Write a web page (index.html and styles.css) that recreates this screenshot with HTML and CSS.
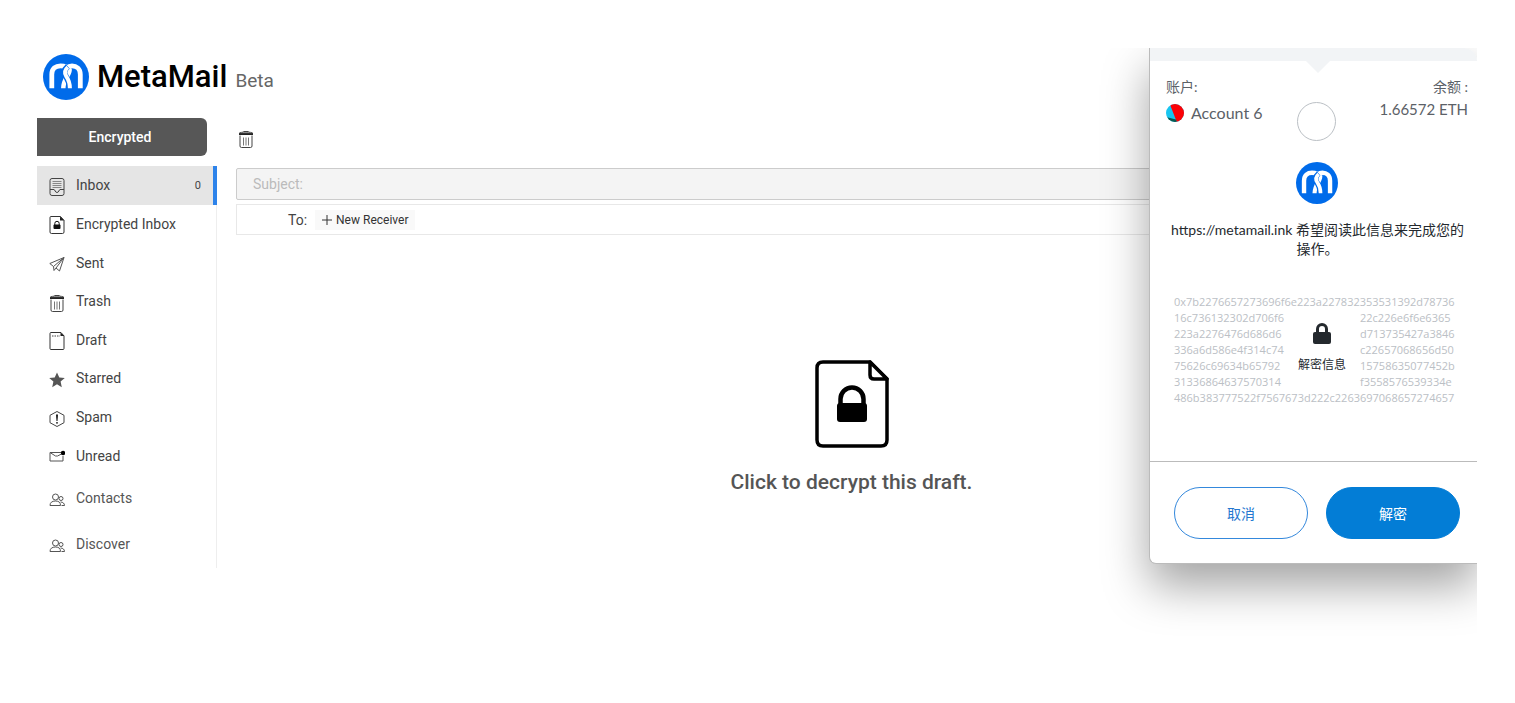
FILE: index.html
```html
<!DOCTYPE html>
<html lang="en">
<head>
<meta charset="utf-8">
<title>MetaMail Beta</title>
<link rel="stylesheet" href="styles.css">
</head>
<body>
<svg class="sprite" aria-hidden="true">
  <symbol id="logo" viewBox="0 0 46 46">
    <circle cx="23" cy="23" r="23" fill="#006bea"/>
    <g fill="none">
      <path d="M37.300 34.300V20.500c0-6-4-8.700-8.300-8.700-2 0-3.500.5-5 2" stroke="#fff" stroke-width="4.800"/>
      <path d="M8.800 34.300V20.500c0-6 4-8.700 8.700-8.700 4.500 0 7 1.500 8.500 4.200" stroke="#fff" stroke-width="4.800"/>
      <path d="M26.500 15c1.500 5-6.200 9-6.200 19.300" stroke="#fff" stroke-width="4.500"/>
      <path d="M24.800 12.500c-4 3.500-4.300 6.500-1.800 10 2 3 3.500 6 3.500 11.800" stroke="#006bea" stroke-width="5.800"/>
      <path d="M24.800 13.300c-3.400 3-3.700 5.700-1.500 9 2.200 3.200 3.600 6 3.600 12" stroke="#fff" stroke-width="4"/>
    </g>
  </symbol>
  <symbol id="trash" viewBox="0 0 16 18">
    <g fill="none" stroke="#444" stroke-width="1">
      <path d="M1 3.500C2 1.500 14 1.500 15 3.500z" fill="#ddd"/>
      <path d="M5.500 1.500h5"/>
      <path d="M2 5.500V16q0 1.500 1.500 1.500h9q1.500 0 1.500-1.500V5.500"/>
      <path d="M5.500 7.500v8M8 7.500v8M10.500 7.500v8" stroke="#777"/>
    </g>
    <path d="M1 3.500h14v1.500H1z" fill="#222"/>
  </symbol>
  <symbol id="securedoc" viewBox="0 0 74 88">
    <path d="M8 2h47l17 17v61q0 6-6 6H8q-6 0-6-6V8q0-6 6-6z" fill="none" stroke="currentColor" stroke-width="3.500"/>
    <path d="M55 2v13q0 4 4 4h13z" fill="#fff" stroke="currentColor" stroke-width="3.500" stroke-linejoin="round"/>
    <path d="M25.500 44v-5a11.500 11.500 0 0 1 23 0v5" fill="none" stroke="currentColor" stroke-width="4.500"/>
    <rect x="22" y="43" width="30" height="19" rx="3"/>
  </symbol>
  <symbol id="people" viewBox="0 0 16 16">
    <g fill="none" stroke="#555">
      <circle cx="6.500" cy="5" r="3"/>
      <path d="M1 13.500h10.500c0-3-1.500-4.500-5-4.500s-5.500 1.500-5.500 4.500z"/>
      <circle cx="12" cy="6.500" r="2"/>
      <path d="M11.500 10c2.500 0 4 1.500 4 3.500h-3"/>
    </g>
  </symbol>
</svg>

<div class="frame">
  <header class="brand">
    <svg class="brand-logo"><use href="#logo"/></svg>
    <h1 class="brand-name">MetaMail</h1>
    <span class="brand-tag">Beta</span>
  </header>

  <div class="workspace">
    <aside class="sidebar">
      <button class="compose" type="button">Encrypted</button>
      <nav class="menu">
        <div class="folders">
          <a class="item item-active" href="#inbox">
            <svg class="icon" viewBox="0 0 16 18"><g fill="none" stroke="#444"><rect x="1" y=".5" width="14" height="17" rx="2"/><path d="M1 11.500h4c1 0 1 3 3 3s2-3 3-3h4"/><path d="M3.500 3.500h9M3.500 5.500h9M3.500 7.500h9M3.500 9.500h9" stroke="#888"/></g></svg>
            <span>Inbox</span><span class="count">0</span>
          </a>
          <a class="item" href="#encrypted">
            <svg class="icon" viewBox="0 0 16 18"><path d="M2 .5h9.500l3.500 4V16q0 1.500-1.500 1.500H2.500Q1 17.500 1 16V1.500q0-1 1-1z" fill="none" stroke="#333"/><path d="M11 .5v4h4.500z" fill="#222"/><path d="M5.800 9V7.500a2.200 2.200 0 0 1 4.400 0v1.500" fill="none" stroke="#111"/><rect x="4.500" y="8.500" width="7" height="4.500" rx="1" fill="#111"/></svg>
            <span>Encrypted Inbox</span>
          </a>
          <a class="item" href="#sent">
            <svg class="icon" viewBox="0 0 16 18"><g fill="none" stroke="#555" stroke-linejoin="round"><path d="M15 2.500L.8 8.500 4.500 11.500 5 15.500l2-2.500 3.500 3z"/><path d="M15 2.500L4.500 11.500M15 2.500L7 13"/></g></svg>
            <span>Sent</span>
          </a>
          <a class="item" href="#trash">
            <svg class="icon"><use href="#trash"/></svg>
            <span>Trash</span>
          </a>
          <a class="item" href="#draft">
            <svg class="icon" viewBox="0 0 16 18"><path d="M2 .5h10L15 4v12.500q0 1-1 1H2q-1 0-1-1v-15q0-1 1-1z" fill="none" stroke="#333"/><path d="M11.500.5v3.500H15.500z" fill="#222"/><path d="M3 4h8" stroke="#444" stroke-dasharray="1.500 1"/></svg>
            <span>Draft</span>
          </a>
          <a class="item" href="#starred">
            <svg class="icon" viewBox="0 0 16 18"><path d="M8 1.500l2.300 4.900 5.500.6-4.200 3.600 1.200 5.600L8 13.300 3.200 16.200l1.200-5.600L.2 7l5.500-.6z" fill="#555"/></svg>
            <span>Starred</span>
          </a>
          <a class="item" href="#spam">
            <svg class="icon" viewBox="0 0 16 18"><path d="M8 1.500l7 3.800v7.400l-7 3.800-7-3.800V5.300z" fill="none" stroke="#444" stroke-linejoin="round"/><path d="M7 4.500h2l-.5 6.500h-1z" fill="#111"/><circle cx="8" cy="12.800" r=".9" fill="#111"/></svg>
            <span>Spam</span>
          </a>
          <a class="item" href="#unread">
            <svg class="icon" viewBox="0 0 16 18"><path d="M12 4.500H1v8.500h13V8M1 4.500l5.500 3.500h2l4-2" fill="none" stroke="#555"/><circle cx="14" cy="5" r="2.200" fill="#000"/></svg>
            <span>Unread</span>
          </a>
        </div>
        <a class="item item-extra" href="#contacts">
          <svg class="icon" viewBox="0 0 16 16"><use href="#people"/></svg>
          <span>Contacts</span>
        </a>
        <a class="item item-extra" href="#discover">
          <svg class="icon" viewBox="0 0 16 16"><use href="#people"/></svg>
          <span>Discover</span>
        </a>
      </nav>
    </aside>

    <main class="draft">
      <div class="toolbar">
        <button class="tool" type="button" aria-label="Delete draft"><svg class="icon"><use href="#trash"/></svg></button>
      </div>
      <input class="subject" type="text" placeholder="Subject:" aria-label="Subject">
      <div class="recipients">
        <span class="recipients-label">To:</span>
        <button class="receiver" type="button"><svg class="plus" viewBox="0 0 10 10"><path d="M5 0v10M0 5h10" stroke="#333"/></svg>New Receiver</button>
      </div>
      <button class="decrypt" type="button">
        <svg class="decrypt-icon"><use href="#securedoc"/></svg>
        <span>Click to decrypt this draft.</span>
      </button>
    </main>
  </div>

  <section class="wallet" lang="zh-CN">
    <div class="wallet-top"></div>
    <div class="wallet-head">
      <div class="account">
        <span>账户:</span>
        <span class="account-name"><svg class="avatar" viewBox="0 0 18 18"><clipPath id="round"><circle cx="9" cy="9" r="9"/></clipPath><g clip-path="url(#round)"><path d="M0 0h18v18H0z" fill="#18c5f0"/><path d="M3-2h17v22h-9l-1-4z" fill="#fb0207"/><path d="M0 13l10 2.500.8 2.500H0z" fill="#0b5850"/></g></svg>Account 6</span>
      </div>
      <span class="network"></span>
      <div class="balance"><span>余额 :</span><span class="amount">1.66572 ETH</span></div>
    </div>
    <svg class="wallet-logo"><use href="#logo"/></svg>
    <p class="request">https://metamail.ink 希望阅读此信息来完成您的操作。</p>
    <div class="cipher">
      <div class="cipher-line">0x7b2276657273696f6e223a227832353531392d78736</div>
      <div class="cipher-line"><span>16c736132302d706f6</span><span>22c226e6f6e6365</span></div>
      <div class="cipher-line"><span>223a2276476d686d6</span><span>d713735427a3846</span></div>
      <div class="cipher-line"><span>336a6d586e4f314c74</span><span>c22657068656d50</span></div>
      <div class="cipher-line"><span>75626c69634b65792</span><span>15758635077452b</span></div>
      <div class="cipher-line"><span>31336864637570314</span><span>f3558576539334e</span></div>
      <div class="cipher-line">486b383777522f7567673d222c2263697068657274657</div>
      <button class="unlock" type="button">
        <svg class="unlock-icon" viewBox="0 0 18 21"><path d="M4.500 10V6a4.500 4.500 0 0 1 9 0v4" fill="none" stroke="#24292e" stroke-width="3"/><rect y="9" width="18" height="12" rx="2" fill="#24292e"/></svg>
        解密信息
      </button>
    </div>
    <footer class="actions">
      <button class="action" type="button">取消</button>
      <button class="action action-main" type="button">解密</button>
    </footer>
  </section>
</div>
</body>
</html>
```

FILE: styles.css
```css
* { box-sizing: border-box; }

body {
  margin: 0;
  padding: 48px 38px 0 37px;
  background: #fff;
  color: #444;
  font-family: Roboto, "Noto Sans CJK SC", sans-serif;
  font-size: 14px;
}

button, input { font: inherit; }
button { border: 0; background: none; color: inherit; cursor: pointer; padding: 0; }
.sprite { position: absolute; width: 0; height: 0; }

.frame { position: relative; overflow: hidden; padding-bottom: 72px; }

.brand { display: flex; align-items: center; height: 58px; padding-left: 6px; }
.brand-logo { width: 46px; height: 46px; flex: none; }
.brand-name { margin: 0 8px; font-size: 31px; font-weight: 500; line-height: 40px; color: #000; }
.brand-tag { padding-top: 6px; font-size: 19px; color: #666; }

.workspace { display: flex; align-items: flex-start; padding-top: 12px; }

.sidebar { width: 180px; flex: none; }
.compose {
  display: block;
  width: 170px;
  height: 38px;
  border-radius: 0 6px 6px 0;
  background: #575757;
  color: #fff;
  font-weight: 500;
  padding-right: 4px;
}
.menu { margin-top: 10px; border-right: 1px solid #eee; padding-bottom: 1px; }
.folders { display: grid; grid-auto-rows: 1fr; height: 309px; }
.item {
  display: flex;
  align-items: center;
  gap: 11px;
  padding: 0 12px;
  color: #444;
  text-decoration: none;
}
.item .icon { margin-top: 3px; }
.item-active { background: #e5e5e5; border-right: 4px solid #2d83ea; margin-right: -1px; }
.item-extra { height: 46px; color: #555; }
.count { margin-left: auto; font-size: 11px; }
.icon { width: 16px; height: 18px; flex: none; }

.draft { flex: 1; min-width: 0; padding-left: 19px; display: flex; flex-direction: column; }
.toolbar { display: flex; align-items: center; height: 50px; padding: 0 0 8px 2px; }
.tool { display: flex; }
.subject {
  height: 32px;
  border: 1px solid #ccc;
  border-radius: 2px;
  padding: 0 16px;
  background: #f4f4f4;
}
.subject::placeholder { color: #bbb; opacity: 1; }
.recipients {
  display: flex;
  align-items: center;
  gap: 8px;
  height: 31px;
  margin-top: 4px;
  border: 1px solid #e8e8e8;
  padding-left: 51px;
}
.receiver {
  display: flex;
  align-items: center;
  gap: 4px;
  height: 20px;
  padding: 0 7px;
  background: #f9f9f9;
  color: #333;
  font-size: 12px;
}
.plus { width: 10px; height: 10px; }
.decrypt {
  display: flex;
  flex-direction: column;
  align-items: center;
  gap: 20px;
  align-self: center;
  margin: 125px 10px 0 0;
  color: #555;
  font-size: 21px;
  font-weight: 500;
  line-height: 28px;
}
.decrypt-icon { width: 74px; height: 88px; color: #000; }

.wallet {
  position: absolute;
  top: 0;
  right: 0;
  width: 328px;
  background: #fff;
  border-left: 1px solid #bbb;
  border-bottom: 1px solid #bbb;
  border-radius: 0 14px 0 7px;
  box-shadow: 0 22px 46px rgba(0, 0, 0, .36);
  color: #5b6167;
  font-family: Lato, "Noto Sans CJK SC", sans-serif;
}
.wallet-top {
  position: relative;
  height: 13px;
  border-radius: 0 14px 0 0;
  background: #f2f4f6;
}
.wallet-top::after {
  content: "";
  position: absolute;
  top: 100%;
  left: calc(50% + 4px);
  border: 12px solid transparent;
  border-top-color: #f2f4f6;
  border-bottom: 0;
  transform: translateX(-50%);
}
.wallet-head {
  display: grid;
  grid-template-columns: 1fr 40px 1fr;
  padding: 15px 9px 0 16px;
  line-height: 22px;
}
.account, .balance { display: flex; flex-direction: column; }
.account-name { display: flex; align-items: center; gap: 7px; font-size: 16px; line-height: 30px; }
.avatar { width: 18px; height: 18px; }
.balance { align-items: flex-end; }
.amount { font-size: 15px; }
.network { width: 39px; height: 39px; margin-top: 26px; border: 1px solid #bbc0c5; border-radius: 50%; }
.wallet-logo { display: block; width: 42px; height: 42px; margin: 21px auto 0 146px; }
.request {
  margin: 16px 8px 0 16px;
  color: #24292e;
  font-size: 14px;
  line-height: 19px;
  text-align: center;
}
.cipher {
  position: relative;
  margin: 36px 16px 0 24px;
  color: #bbc0c5;
  font-family: "Open Sans", "Noto Sans CJK SC", sans-serif;
  font-size: 11px;
  line-height: 16px;
}
.cipher-line { display: grid; grid-template-columns: 186px 1fr; height: 16px; white-space: nowrap; }
.unlock {
  position: absolute;
  inset: 14px auto auto 110px;
  width: 76px;
  height: 80px;
  display: flex;
  flex-direction: column;
  align-items: center;
  justify-content: center;
  gap: 12px;
  color: #24292e;
  font-size: 12px;
  line-height: 18px;
}
.unlock-icon { width: 18px; height: 21px; }
.actions {
  display: flex;
  gap: 18px;
  margin-top: 55px;
  padding: 25px 17px 24px 24px;
  border-top: 1px solid #bbb;
}
.action {
  flex: 1;
  height: 52px;
  border: 1px solid #3488dc;
  border-radius: 26px;
  color: #2477d0;
}
.action-main { border-color: #037dd6; background: #037dd6; color: #fff; }
```
